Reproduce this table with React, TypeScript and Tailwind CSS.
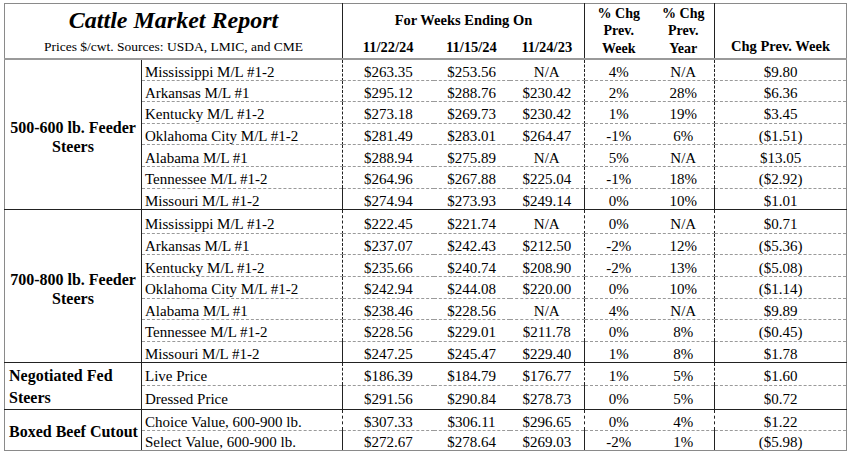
import React from "react";

type Row = [string, string, string, string, string, string, string];

const groups: { lines: string[]; align: "center" | "left"; rows: Row[] }[] = [
  {
    lines: ["500-600 lb. Feeder", "Steers"],
    align: "center",
    rows: [
      ["Mississippi M/L #1-2", "$263.35", "$253.56", "N/A", "4%", "N/A", "$9.80"],
      ["Arkansas M/L #1", "$295.12", "$288.76", "$230.42", "2%", "28%", "$6.36"],
      ["Kentucky M/L #1-2", "$273.18", "$269.73", "$230.42", "1%", "19%", "$3.45"],
      ["Oklahoma City M/L #1-2", "$281.49", "$283.01", "$264.47", "-1%", "6%", "($1.51)"],
      ["Alabama M/L #1", "$288.94", "$275.89", "N/A", "5%", "N/A", "$13.05"],
      ["Tennessee M/L #1-2", "$264.96", "$267.88", "$225.04", "-1%", "18%", "($2.92)"],
      ["Missouri M/L #1-2", "$274.94", "$273.93", "$249.14", "0%", "10%", "$1.01"],
    ],
  },
  {
    lines: ["700-800 lb. Feeder", "Steers"],
    align: "center",
    rows: [
      ["Mississippi M/L #1-2", "$222.45", "$221.74", "N/A", "0%", "N/A", "$0.71"],
      ["Arkansas M/L #1", "$237.07", "$242.43", "$212.50", "-2%", "12%", "($5.36)"],
      ["Kentucky M/L #1-2", "$235.66", "$240.74", "$208.90", "-2%", "13%", "($5.08)"],
      ["Oklahoma City M/L #1-2", "$242.94", "$244.08", "$220.00", "0%", "10%", "($1.14)"],
      ["Alabama M/L #1", "$238.46", "$228.56", "N/A", "4%", "N/A", "$9.89"],
      ["Tennessee M/L #1-2", "$228.56", "$229.01", "$211.78", "0%", "8%", "($0.45)"],
      ["Missouri M/L #1-2", "$247.25", "$245.47", "$229.40", "1%", "8%", "$1.78"],
    ],
  },
  {
    lines: ["Negotiated Fed", "Steers"],
    align: "left",
    rows: [
      ["Live Price", "$186.39", "$184.79", "$176.77", "1%", "5%", "$1.60"],
      ["Dressed Price", "$291.56", "$290.84", "$278.73", "0%", "5%", "$0.72"],
    ],
  },
  {
    lines: ["Boxed Beef Cutout"],
    align: "left",
    rows: [
      ["Choice Value, 600-900 lb.", "$307.33", "$306.11", "$296.65", "0%", "4%", "$1.22"],
      ["Select Value, 600-900 lb.", "$272.67", "$278.64", "$269.03", "-2%", "1%", "($5.98)"],
    ],
  },
];

// columns that carry a dark rule on their right side
const ruled = [0, 3, 5];

function categoryClass(gi: number) {
  if (gi < 2) return "text-center align-middle pt-[6px] leading-[19px]";
  if (gi === 2) return "text-left align-top pl-[4px] pt-[2px] leading-[21.6px]";
  return "text-left align-middle pl-[4px] pt-[3px] leading-[19px]";
}

function rowClass(gi: number, ri: number, last: boolean) {
  if (gi === 1 && ri === 0) return { tr: "h-[23.6px]", pad: "pt-[6px]" };
  if (gi === groups.length - 1 && last) return { tr: "h-[19.6px]", pad: "pt-[3px]" };
  return { tr: "h-[21.6px]", pad: "pt-[4px]" };
}

export default function App() {
  return (
    <div className="w-[850px] h-[454px] bg-white pl-[4px] pt-[3px] font-['Liberation_Serif','Times_New_Roman',serif] text-black">
      <table className="table-fixed border-collapse w-[842px] border border-[#8a8a8a]">
        <colgroup>
          <col className="w-[137px]" />
          <col className="w-[201px]" />
          <col className="w-[91px]" />
          <col className="w-[76px]" />
          <col className="w-[75px]" />
          <col className="w-[68px]" />
          <col className="w-[62px]" />
          <col className="w-[132px]" />
        </colgroup>
        <thead>
          <tr className="h-[33px]">
            <th colSpan={2} className="p-0 border-r border-[#222] align-middle text-[24px] font-bold italic leading-[26px]">
              Cattle Market Report
            </th>
            <th colSpan={3} className="p-0 border-r border-[#222] align-middle text-[14.5px] font-bold leading-[18px]">
              For Weeks Ending On
            </th>
            <th rowSpan={2} className="p-0 align-middle text-[14px] font-bold leading-[17.5px] border-b-2 border-b-[#9a9a9a]">
              % Chg
              <br />
              Prev.
              <br />
              Week
            </th>
            <th rowSpan={2} className="p-0 border-r border-[#222] align-middle text-[14px] font-bold leading-[17.5px] border-b-2 border-b-[#9a9a9a]">
              % Chg
              <br />
              Prev.
              <br />
              Year
            </th>
            <th rowSpan={2} className="p-0 align-bottom text-[14.5px] font-bold leading-[18px] pb-[3px] border-b-2 border-b-[#9a9a9a]">
              Chg Prev. Week
            </th>
          </tr>
          <tr className="h-[22px]">
            <th colSpan={2} className="p-0 border-r border-[#222] border-b-2 border-b-[#9a9a9a] text-[13.5px] font-normal leading-[16px] align-middle">
              Prices $/cwt. Sources: USDA, LMIC, and CME
            </th>
            <th className="p-0 border-b-2 border-b-[#9a9a9a] text-[14.5px] font-bold leading-[16px]">11/22/24</th>
            <th className="p-0 border-b-2 border-b-[#9a9a9a] text-[14.5px] font-bold leading-[16px]">11/15/24</th>
            <th className="p-0 border-r border-[#222] border-b-2 border-b-[#9a9a9a] text-[14.5px] font-bold leading-[16px]">
              11/24/23
            </th>
          </tr>
        </thead>
        <tbody>
          {groups.map((g, gi) =>
            g.rows.map((row, ri) => {
              const last = ri === g.rows.length - 1;
              const bottom = last
                ? gi === groups.length - 1
                  ? "border-b border-b-[#8a8a8a]"
                  : "border-b border-b-[#222]"
                : "border-b border-dashed border-b-[#9a9a9a]";
              const rc = rowClass(gi, ri, last);
              return (
                <tr key={`${gi}-${ri}`} className={rc.tr}>
                  {ri === 0 && (
                    <td
                      rowSpan={g.rows.length}
                      className={`p-0 border-r border-[#222] ${
                        gi === groups.length - 1 ? "border-b-[#8a8a8a]" : "border-b-[#222]"
                      } border-b text-[16px] font-bold ${categoryClass(gi)}`}
                    >
                      {g.lines.map((l) => (
                        <div key={l}>{l}</div>
                      ))}
                    </td>
                  )}
                  {row.map((cell, ci) => (
                    <td
                      key={ci}
                      className={`p-0 ${rc.pad} text-[15px] leading-[16px] whitespace-nowrap ${bottom} ${
                        ruled.includes(ci) ? "border-r border-r-[#222]" : ""
                      } ${ci === 0 ? "text-left pl-[3px]" : "text-center"}`}
                    >
                      {cell}
                    </td>
                  ))}
                </tr>
              );
            })
          )}
        </tbody>
      </table>
    </div>
  );
}
